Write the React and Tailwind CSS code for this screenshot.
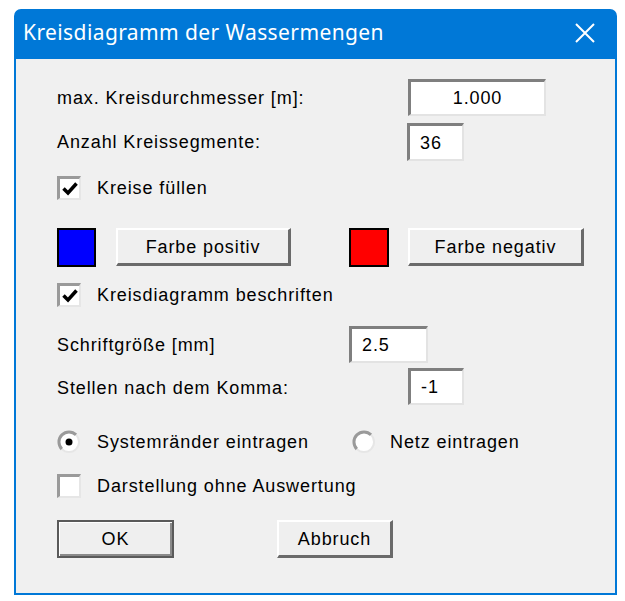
import React from "react";

function Check({ checked }) {
  return (
    <div className="w-[24px] h-[24px] shrink-0 bg-white border-t-[3px] border-l-[3px] border-t-[#9a9a9a] border-l-[#9a9a9a] border-b-2 border-r-2 border-b-[#e6e6e6] border-r-[#e6e6e6] flex items-center justify-center">
      {checked && (
        <svg width="16" height="14" viewBox="0 0 16 14">
          <path d="M1.5 6.5 L6 11 L14.5 1.5" stroke="black" strokeWidth="3.5" fill="none" />
        </svg>
      )}
    </div>
  );
}

function Radio({ checked }) {
  return (
    <svg width="24" height="24" viewBox="0 0 24 24" className="shrink-0">
      <circle cx="12" cy="12" r="10" fill="white" />
      <path d="M4.9 19.1 A10 10 0 0 1 19.1 4.9" stroke="#9a9a9a" strokeWidth="3" fill="none" />
      <path d="M19.1 4.9 A10 10 0 0 1 4.9 19.1" stroke="#e6e6e6" strokeWidth="2" fill="none" />
      {checked && <circle cx="12" cy="12" r="3.5" fill="black" />}
    </svg>
  );
}

function Field({ w, h, center, children }) {
  return (
    <div
      className={
        "shrink-0 bg-white border-t-[3px] border-l-[3px] border-t-[#7f7f7f] border-l-[#7f7f7f] border-b-2 border-r-2 border-b-[#e3e3e3] border-r-[#e3e3e3] flex items-center " +
        (center ? "justify-center" : "justify-start pl-[10px]")
      }
      style={{ width: w, height: h }}
    >
      {children}
    </div>
  );
}

function Btn({ w, children, def }) {
  return (
    <div
      className={
        "shrink-0 h-[38px] bg-[#efefef] flex items-center justify-center " +
        (def
          ? "border-2 border-[#5a5a5a] shadow-[inset_1px_1px_0_#ffffff,inset_-2px_-2px_0_#8a8a8a]"
          : "border-t-2 border-l-2 border-t-white border-l-white border-b-[3px] border-r-[3px] border-b-[#6a6a6a] border-r-[#6a6a6a]")
      }
      style={{ width: w }}
    >
      {children}
    </div>
  );
}

export default function App() {
  return (
    <div className="w-[625px] h-[601px] bg-white pt-[9px] pl-[14px]">
      <div
        className="w-[603px] h-[586px] bg-[#0078d7] rounded-t-[7px] flex flex-col px-[2px] pb-[2px] text-black"
        style={{ fontFamily: '"Liberation Sans", Arial, sans-serif' }}
      >
        <div className="h-[50px] shrink-0 flex items-center justify-between pl-[7px] pr-[20px]">
          <span
            className="text-white text-[21px] leading-none tracking-[0.4px] pb-[3px]"
            style={{ fontFamily: '"Noto Sans", "Open Sans", sans-serif' }}
          >
            Kreisdiagramm der Wassermengen
          </span>
          <svg width="20" height="20" viewBox="0 0 20 20" className="mb-[2px]">
            <path d="M1 1 L19 19 M19 1 L1 19" stroke="white" strokeWidth="2" />
          </svg>
        </div>
        <div className="flex-1 bg-[#f0f0f0] pl-[41px] flex flex-col text-[18px] tracking-[0.9px] leading-none">
          <div className="mt-[20px] h-[37px] flex items-center">
            <div className="w-[351px] pt-[1px]">max. Kreisdurchmesser [m]:</div>
            <Field w={138} h={37} center>1.000</Field>
          </div>
          <div className="mt-[7px] h-[38px] flex items-center">
            <div className="w-[350px]">Anzahl Kreissegmente:</div>
            <Field w={57} h={38}>36</Field>
          </div>
          <div className="mt-[15px] h-[24px] flex items-center">
            <Check checked />
            <span className="ml-[16px]">Kreise füllen</span>
          </div>
          <div className="mt-[27px] h-[40px] flex items-center">
            <div className="w-[39px] h-[39px] bg-[#0000ff] border-2 border-black shrink-0" />
            <div className="ml-[20px]">
              <Btn w={175}>Farbe positiv</Btn>
            </div>
            <div className="ml-[58px] w-[40px] h-[39px] bg-[#ff0000] border-2 border-black shrink-0" />
            <div className="ml-[19px]">
              <Btn w={176}>Farbe negativ</Btn>
            </div>
          </div>
          <div className="mt-[16px] h-[24px] flex items-center">
            <Check checked />
            <span className="ml-[16px]">Kreisdiagramm beschriften</span>
          </div>
          <div className="mt-[19px] h-[37px] flex items-center">
            <div className="w-[292px]">Schriftgröße [mm]</div>
            <Field w={79} h={37}>2.5</Field>
          </div>
          <div className="mt-[5px] h-[37px] flex items-center">
            <div className="w-[351px] pt-[2px]">Stellen nach dem Komma:</div>
            <Field w={56} h={37}>-1</Field>
          </div>
          <div className="mt-[25px] h-[24px] flex items-center">
            <Radio checked />
            <span className="ml-[16px] w-[255px]">Systemränder eintragen</span>
            <Radio />
            <span className="ml-[14px]">Netz eintragen</span>
          </div>
          <div className="mt-[20px] h-[24px] flex items-center">
            <Check />
            <span className="ml-[16px]">Darstellung ohne Auswertung</span>
          </div>
          <div className="mt-[22px] flex items-center">
            <Btn w={117} def>OK</Btn>
            <div className="ml-[103px]">
              <Btn w={116}>Abbruch</Btn>
            </div>
          </div>
        </div>
      </div>
    </div>
  );
}
